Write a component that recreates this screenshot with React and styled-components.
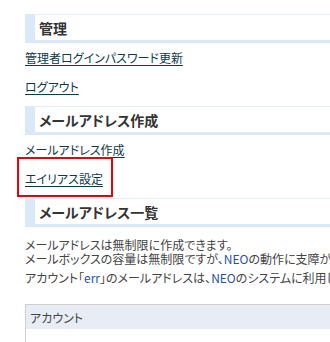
import React from 'react'
import styled, { createGlobalStyle } from 'styled-components'

const Global = createGlobalStyle`
  html, body {
    margin: 0;
    padding: 0;
    background: #fff;
    overflow: hidden;
  }
  body {
    font-family: "Noto Sans CJK JP", "Noto Sans", sans-serif;
    font-feature-settings: "palt";
    color: #444;
  }
`

const Page = styled.div`
  width: 720px;
  padding: 14px 0 0 25px;
`

const SectionTitle = styled.h2`
  margin: 0;
  height: 25px;
  display: flex;
  align-items: center;
  padding-left: 4px;
  border-top: 1px solid #e4edf8;
  border-left: 10px solid #dbe8f8;
  border-bottom: 3px solid #dbe8f8;
  font-size: 14px;
  font-weight: 700;
  color: #333;
`

const LinkList = styled.ul`
  list-style: none;
  margin: 0;
  padding: 5px 0 11px;
  display: flex;
  flex-direction: column;
  align-items: flex-start;
  gap: 11px;
`

const Item = styled.li`
  position: relative;
  line-height: 16px;
  ${(p) =>
    p.$marked &&
    `
    &::after {
      content: '';
      position: absolute;
      inset: -12px -10px -10px -8px;
      border: 2px solid #e8000b;
      pointer-events: none;
    }
  `}
`

const NavLink = styled.a`
  font-size: 12px;
  color: #0e3a48;
  text-decoration: underline;
  text-underline-offset: 2px;
  cursor: pointer;
`

const Note = styled.p`
  margin: ${(p) => p.$top}px 0 0;
  font-size: 12px;
  line-height: 14px;
  color: #444;
  white-space: nowrap;
`

const Em = styled.span`
  color: #1f52a6;
`

const Table = styled.div`
  margin-top: 19px;
  border: 1px solid #cfcfcf;
  border-right: none;
`

const HeadCell = styled.div`
  height: 24px;
  display: flex;
  align-items: center;
  padding-left: 4px;
  background: #e8edf5;
  font-size: 12px;
  color: #444;
`

const BodyRow = styled.div`
  height: 30px;
`

const sections = [
  { title: '管理', links: ['管理者ログインパスワード更新', 'ログアウト'] },
  { title: 'メールアドレス作成', links: ['メールアドレス作成', 'エイリアス設定'] },
]

export default function App() {
  return (
    <Page>
      <Global />
      {sections.map((s) => (
        <section key={s.title}>
          <SectionTitle>{s.title}</SectionTitle>
          <LinkList>
            {s.links.map((l) => (
              <Item key={l} $marked={l === 'エイリアス設定'}>
                <NavLink>{l}</NavLink>
              </Item>
            ))}
          </LinkList>
        </section>
      ))}
      <SectionTitle>メールアドレス一覧</SectionTitle>
      <Note $top={11}>
        メールアドレスは無制限に作成できます。
        <br />
        メールボックスの容量は無制限ですが、<Em>NEO</Em>の動作に支障が出ない範囲でご利用ください。
      </Note>
      <Note $top={5}>
        アカウント「<Em>err</Em>」のメールアドレスは、<Em>NEO</Em>のシステムに利用しています。
      </Note>
      <Table>
        <HeadCell>アカウント</HeadCell>
        <BodyRow />
      </Table>
    </Page>
  )
}
